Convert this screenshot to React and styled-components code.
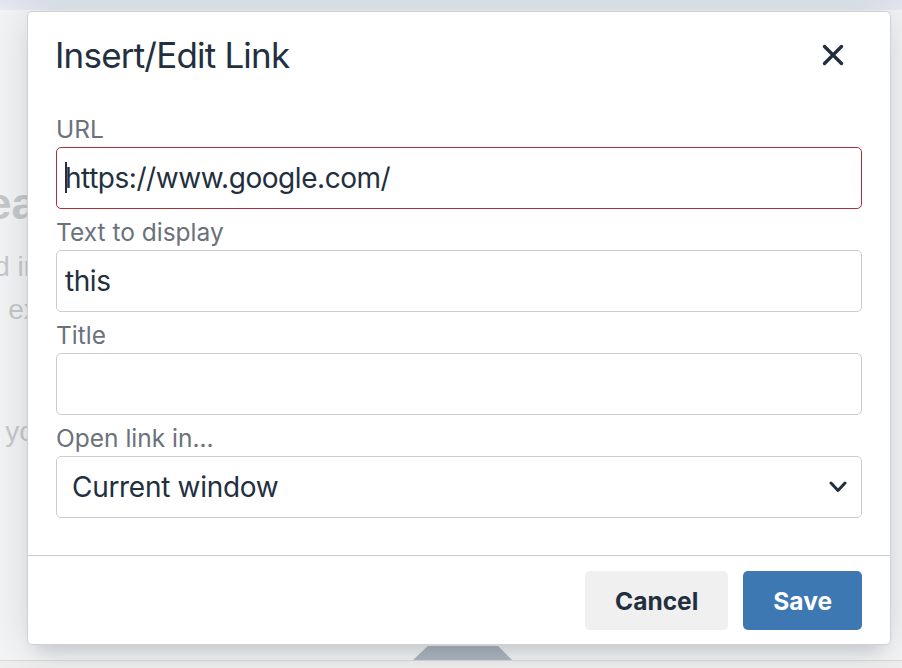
import React from "react";
import styled, { createGlobalStyle } from "styled-components";

const GlobalStyle = createGlobalStyle`
  html, body {
    margin: 0;
    padding: 0;
  }
  body {
    font-family: Inter, "Noto Sans", sans-serif;
    background: #f3f4f5;
  }
`;

// page behind the modal (already faded by the backdrop)
const Page = styled.div`
  position: relative;
  width: 902px;
  height: 668px;
  overflow: hidden;
  display: flex;
  flex-direction: column;
  background: #f3f4f5;
`;

const TopBand = styled.div`
  height: 10px;
  background: linear-gradient(#e0e5ef, #e8ebf2);
`;

const Article = styled.div`
  flex: 1;
  padding-top: 167px;
  color: #c6c8cb;
  font-family: "Liberation Sans", Arial, sans-serif;
  white-space: nowrap;
`;

const Heading = styled.h1`
  margin: 0 0 0 -46px;
  font-size: 45px;
  line-height: 54px;
`;

const Line = styled.p`
  margin: ${(p) => p.$top || 0}px 0 0 0;
  font-size: 28px;
  line-height: 43px;
  text-indent: ${(p) => p.$indent}px;
`;

const TabRow = styled.div`
  height: 14px;
  display: flex;
`;

const Tab = styled.div`
  margin-left: 413px;
  width: 99px;
  background: #adb6bf;
  clip-path: polygon(15% 0, 86% 0, 100% 100%, 0 100%);
`;

const StatusBar = styled.div`
  height: 7px;
  border-top: 1px solid #d9dadb;
  background: #eeeeee;
`;

// the dialog
const Dialog = styled.div`
  position: absolute;
  left: 27px;
  top: 11px;
  width: 864px;
  box-sizing: border-box;
  background: #fff;
  border: 1px solid #cfd1d4;
  border-radius: 5px;
  box-shadow: 0 16px 16px -10px rgba(34, 47, 62, 0.15),
    0 0 40px 1px rgba(34, 47, 62, 0.15);
  color: #222f3e;
`;

const Header = styled.div`
  display: flex;
  align-items: center;
  justify-content: space-between;
  padding: 20px 26px 0 27px;
`;

const Title = styled.h2`
  margin: 0;
  font-size: 35px;
  font-weight: 400;
  line-height: 46px;
  letter-spacing: -0.8px;
`;

const CloseButton = styled.button`
  width: 42px;
  height: 42px;
  margin-right: 10px;
  display: flex;
  align-items: center;
  justify-content: center;
  border: 0;
  padding: 0;
  background: transparent;
  color: #222f3e;
  cursor: pointer;
`;

const Body = styled.div`
  display: flex;
  flex-direction: column;
  gap: 7px;
  padding: 35px 28px 37px;
`;

const Field = styled.div`
  display: flex;
  flex-direction: column;
  gap: 2px;
`;

const Label = styled.label`
  font-size: 24.5px;
  line-height: 32px;
  color: #6b727c;
`;

const InputWrap = styled.div`
  position: relative;
  ${(p) =>
    p.$caret &&
    `
    &::before {
      content: "";
      position: absolute;
      left: 9px;
      top: 15px;
      width: 2px;
      height: 31px;
      background: #222f3e;
    }
  `}
`;

const Input = styled.input`
  display: block;
  width: 100%;
  height: 62px;
  box-sizing: border-box;
  padding: 0 8px;
  border: 1px solid ${(p) => (p.$invalid ? "#a8333d" : "#cccccc")};
  border-radius: 5px;
  font-family: Inter, "Noto Sans", sans-serif;
  font-size: 28px;
  letter-spacing: -0.45px;
  color: #222f3e;
  background: #fff;
  outline: none;
`;

const SelectWrap = styled.div`
  position: relative;
`;

const Select = styled.select`
  display: block;
  width: 100%;
  height: 62px;
  box-sizing: border-box;
  padding: 0 48px 0 15px;
  border: 1px solid #cccccc;
  border-radius: 5px;
  font-family: Inter, "Noto Sans", sans-serif;
  font-size: 28px;
  letter-spacing: -0.3px;
  color: #222f3e;
  background: #fff;
  appearance: none;
  outline: none;
`;

const Chevron = styled.svg`
  position: absolute;
  right: 15px;
  top: 25px;
  pointer-events: none;
`;

const Footer = styled.div`
  display: flex;
  justify-content: flex-end;
  gap: 15px;
  padding: 15px 28px 14px;
  border-top: 1px solid #cccccc;
`;

const Button = styled.button`
  height: 59px;
  padding: 0 30px;
  border: 0;
  border-radius: 5px;
  font-family: Inter, "Noto Sans", sans-serif;
  font-size: 24.5px;
  font-weight: 700;
  background: ${(p) => (p.$primary ? "#3e78b2" : "#f0f0f0")};
  color: ${(p) => (p.$primary ? "#ffffff" : "#222f3e")};
  cursor: pointer;
`;

export default function App() {
  return (
    <>
      <GlobalStyle />
      <Page>
        <TopBand />
        <Article>
          <Heading>Heading</Heading>
          <Line $indent={-37} $top={14}>and images</Line>
          <Line $indent={-23}>to extend</Line>
          <Line $indent={-18} $top={79}>If you</Line>
        </Article>
        <TabRow>
          <Tab />
        </TabRow>
        <StatusBar />

        <Dialog role="dialog" aria-label="Insert/Edit Link">
          <Header>
            <Title>Insert/Edit Link</Title>
            <CloseButton aria-label="Close">
              <svg width="22" height="22" viewBox="0 0 22 22">
                <path
                  d="M2.5 2.5 L19.5 19.5 M19.5 2.5 L2.5 19.5"
                  stroke="currentColor"
                  strokeWidth="3.4"
                  strokeLinecap="round"
                />
              </svg>
            </CloseButton>
          </Header>

          <Body>
            <Field>
              <Label>URL</Label>
              <InputWrap $caret>
                <Input $invalid readOnly value="https://www.google.com/" />
              </InputWrap>
            </Field>
            <Field>
              <Label>Text to display</Label>
              <InputWrap>
                <Input readOnly value="this" />
              </InputWrap>
            </Field>
            <Field>
              <Label>Title</Label>
              <InputWrap>
                <Input readOnly value="" />
              </InputWrap>
            </Field>
            <Field>
              <Label>Open link in...</Label>
              <SelectWrap>
                <Select defaultValue="current">
                  <option value="current">Current window</option>
                  <option value="new">New window</option>
                </Select>
                <Chevron width="18" height="12" viewBox="0 0 18 12">
                  <path
                    d="M2 2 L9 9.5 L16 2"
                    fill="none"
                    stroke="#222f3e"
                    strokeWidth="3"
                    strokeLinecap="round"
                    strokeLinejoin="round"
                  />
                </Chevron>
              </SelectWrap>
            </Field>
          </Body>

          <Footer>
            <Button>Cancel</Button>
            <Button $primary>Save</Button>
          </Footer>
        </Dialog>
      </Page>
    </>
  );
}
